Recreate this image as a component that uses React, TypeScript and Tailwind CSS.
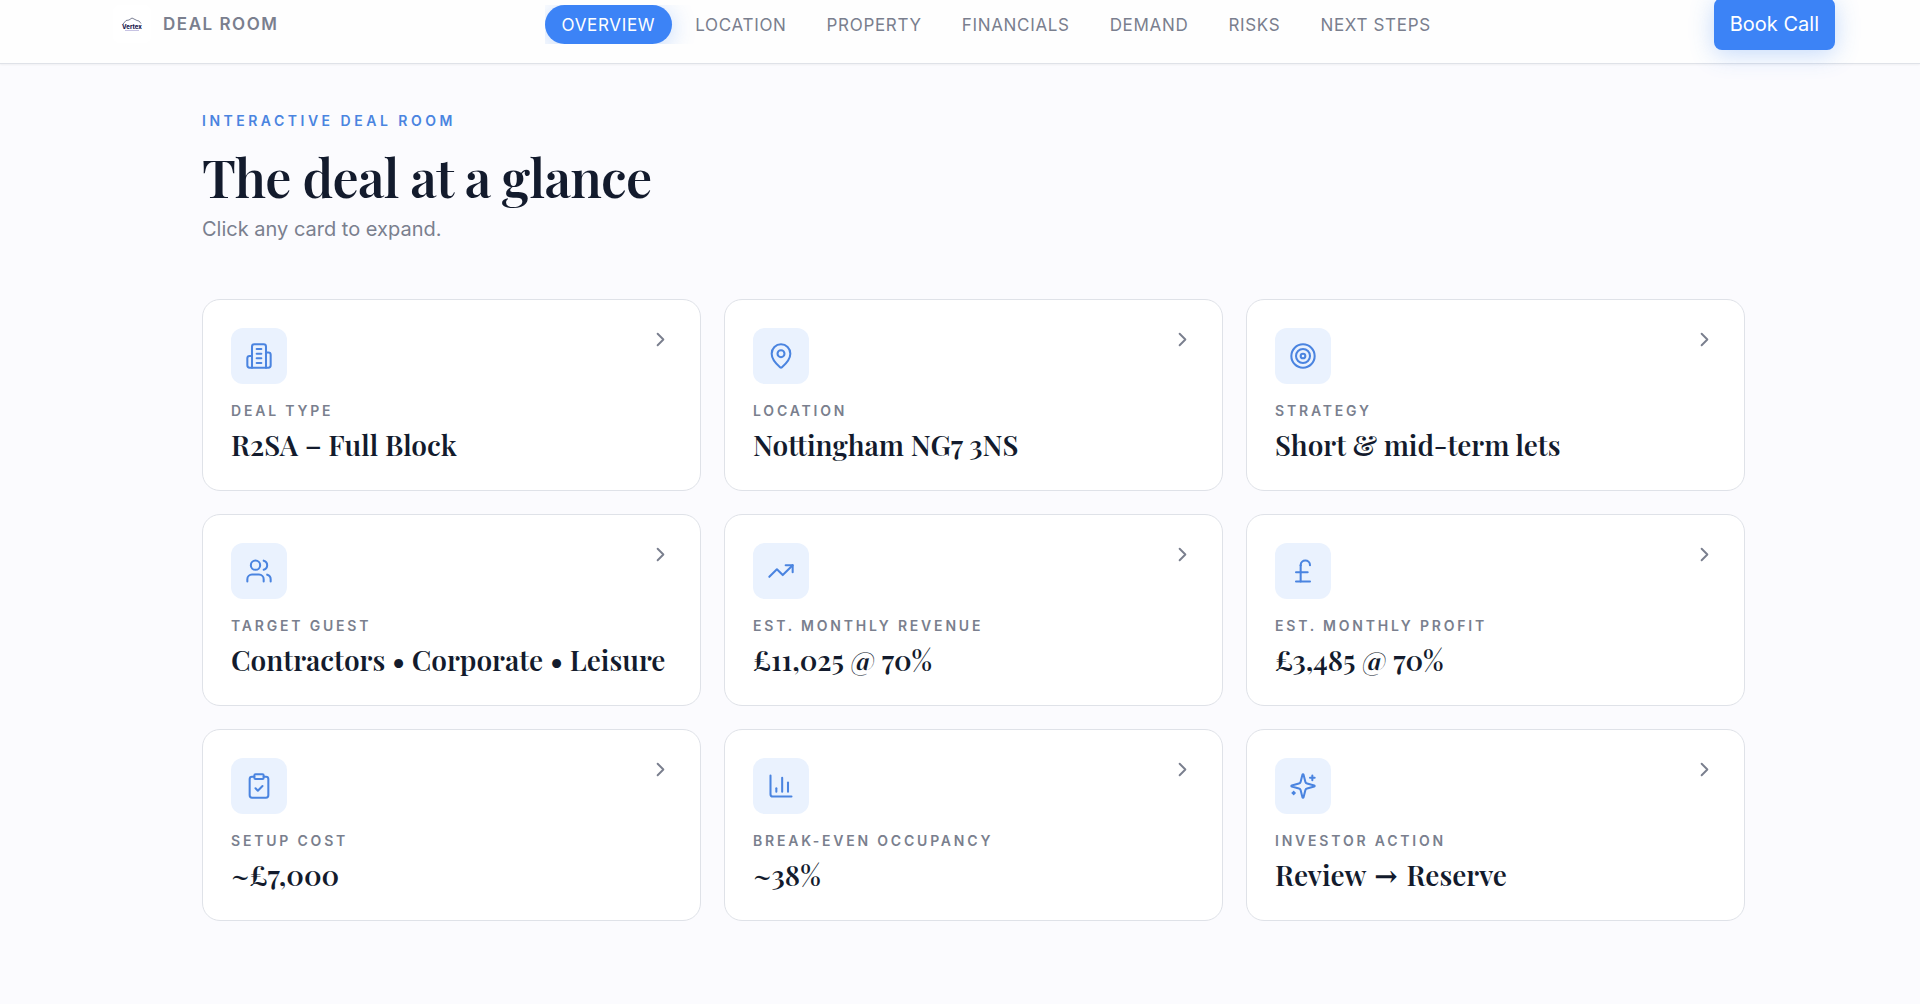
import type { ReactNode } from "react";
import {
  ChartColumn,
  ChevronRight,
  ClipboardCheck,
  MapPin,
  PoundSterling,
  Target,
  TrendingUp,
  Users,
} from "lucide-react";

const navItems = ["Overview", "Location", "Property", "Financials", "Demand", "Risks", "Next Steps"];

const iconProps = { size: 28, strokeWidth: 1.75 };

// Playfair has a decorative arrow, so the plain one comes from another face
const arrow = <span className="mx-0.5 leading-none font-bold font-['DejaVu_Serif',serif]">→</span>;

const cards: CardProps[] = [
  { label: "Deal type", value: "R2SA – Full Block", icon: <BuildingIcon /> },
  { label: "Location", value: "Nottingham NG7 3NS", icon: <MapPin {...iconProps} /> },
  { label: "Strategy", value: "Short & mid-term lets", icon: <Target {...iconProps} /> },
  { label: "Target guest", value: "Contractors • Corporate • Leisure", icon: <Users {...iconProps} /> },
  { label: "Est. monthly revenue", value: "£11,025 @ 70%", icon: <TrendingUp {...iconProps} /> },
  { label: "Est. monthly profit", value: "£3,485 @ 70%", icon: <PoundSterling {...iconProps} /> },
  { label: "Setup cost", value: "~£7,000", icon: <ClipboardCheck {...iconProps} /> },
  { label: "Break-even occupancy", value: "~38%", icon: <ChartColumn {...iconProps} /> },
  { label: "Investor action", value: <>Review {arrow} Reserve</>, icon: <SparklesIcon /> },
];

export default function App() {
  return (
    <div className="min-h-screen bg-[#fbfbfe] font-['Inter',sans-serif] text-[#131b2d]">
      <Header />

      <main className="pl-[202px] pr-[175px] pt-[47px] pb-20">
        <p className="text-sm leading-5 font-semibold tracking-[0.25em] uppercase text-[#4a84e0]">
          Interactive Deal Room
        </p>
        <h1 className="mt-4 text-[52px] leading-[60px] font-semibold tracking-[-0.015em] font-['Playfair_Display','Liberation_Serif',serif]">
          The deal at a glance
        </h1>
        <p className="mt-2 text-[20px] leading-7 text-[#7a7f8e]">Click any card to expand.</p>

        <div className="mt-14 grid grid-cols-3 gap-[23px]">
          {cards.map((card) => (
            <DealCard key={card.label} {...card} />
          ))}
        </div>
      </main>
    </div>
  );
}

function Header() {
  return (
    <header className="flex h-16 items-center justify-between border-b border-[#dfe2e8] bg-[#fefefe] pb-[15px] pl-[113px] pr-[85px] shadow-xs">
      <a href="#" className="flex items-center gap-3">
        <Logo />
        <span className="text-[17px] leading-6 font-semibold tracking-[0.09em] uppercase text-[#7a7f8e]">
          Deal Room
        </span>
      </a>

      {/* overflow is clipped here, so the pill's glow stays inside the bar */}
      <nav className="flex gap-1.5 overflow-hidden">
        {navItems.map((item, i) => (
          <a
            key={item}
            href="#"
            className={
              i === 0
                ? "rounded-full bg-[#3c83f6] px-[17px] pt-2 pb-[7px] text-[17px] leading-6 tracking-[0.04em] uppercase text-white shadow-[0_4px_24px_rgba(60,131,246,0.3)]"
                : "rounded-full px-[17px] pt-2 pb-[7px] text-[17px] leading-6 tracking-[0.04em] uppercase text-[#7a7f8e]"
            }
          >
            {item}
          </a>
        ))}
      </nav>

      <button className="h-[52px] rounded-lg bg-[#3c83f6] px-4 text-[20px] leading-6 text-white shadow-[0_4px_24px_rgba(60,131,246,0.3)]">
        Book Call
      </button>
    </header>
  );
}

type CardProps = {
  label: string;
  value: ReactNode;
  icon: ReactNode;
};

function DealCard({ label, value, icon }: CardProps) {
  return (
    <button className="rounded-[18px] border border-[#dfe2e8] bg-white p-7 text-left">
      <span className="flex items-start justify-between">
        <span className="flex size-14 items-center justify-center rounded-xl bg-[#eaf2fe] text-[#4a84e0]">
          {icon}
        </span>
        <ChevronRight size={23} className="text-[#7a7f8e]" />
      </span>
      <span className="mt-4 block text-sm leading-[22px] font-semibold tracking-[0.2em] uppercase text-[#7a7f8e]">
        {label}
      </span>
      <span className="mt-1.5 block text-[28px] leading-[34px] font-semibold whitespace-nowrap font-['Playfair_Display','Liberation_Serif',serif]">
        {value}
      </span>
    </button>
  );
}

function Logo() {
  return (
    <svg width="38" height="38" viewBox="0 0 38 38" className="rounded-md bg-white">
      <path
        d="M10 19 L13 15.5 L16 15 L19 13 L24 15.5 L26 16 L28 18.5"
        fill="none"
        stroke="#5b6078"
        strokeWidth="0.8"
      />
      <text x="19" y="24" textAnchor="middle" fontSize="6" fontWeight="800" fill="#1d2150">
        Vertex
      </text>
      <path d="M12 25.5h14" stroke="#b9b4dc" strokeWidth="0.8" />
    </svg>
  );
}

function BuildingIcon() {
  return (
    <svg
      width="28"
      height="28"
      viewBox="0 0 24 24"
      fill="none"
      stroke="currentColor"
      strokeWidth="1.75"
      strokeLinecap="round"
      strokeLinejoin="round"
    >
      <path d="M6 22V4a2 2 0 0 1 2-2h8a2 2 0 0 1 2 2v18Z" />
      <path d="M6 12H4a2 2 0 0 0-2 2v6a2 2 0 0 0 2 2h2" />
      <path d="M18 9h2a2 2 0 0 1 2 2v9a2 2 0 0 1-2 2h-2" />
      <path d="M10 6h4M10 10h4M10 14h4M10 18h4" />
    </svg>
  );
}

function SparklesIcon() {
  return (
    <svg
      width="28"
      height="28"
      viewBox="0 0 24 24"
      fill="none"
      stroke="currentColor"
      strokeWidth="1.75"
      strokeLinecap="round"
      strokeLinejoin="round"
    >
      <path d="M9.937 15.5A2 2 0 0 0 8.5 14.063l-6.135-1.582a.5.5 0 0 1 0-.962L8.5 9.936A2 2 0 0 0 9.937 8.5l1.582-6.135a.5.5 0 0 1 .963 0L14.063 8.5A2 2 0 0 0 15.5 9.937l6.135 1.581a.5.5 0 0 1 0 .964L15.5 14.063a2 2 0 0 0-1.437 1.437l-1.582 6.135a.5.5 0 0 1-.963 0z" />
      <path d="M20 3v4M22 5h-4M4 17v2M5 18H3" />
    </svg>
  );
}
